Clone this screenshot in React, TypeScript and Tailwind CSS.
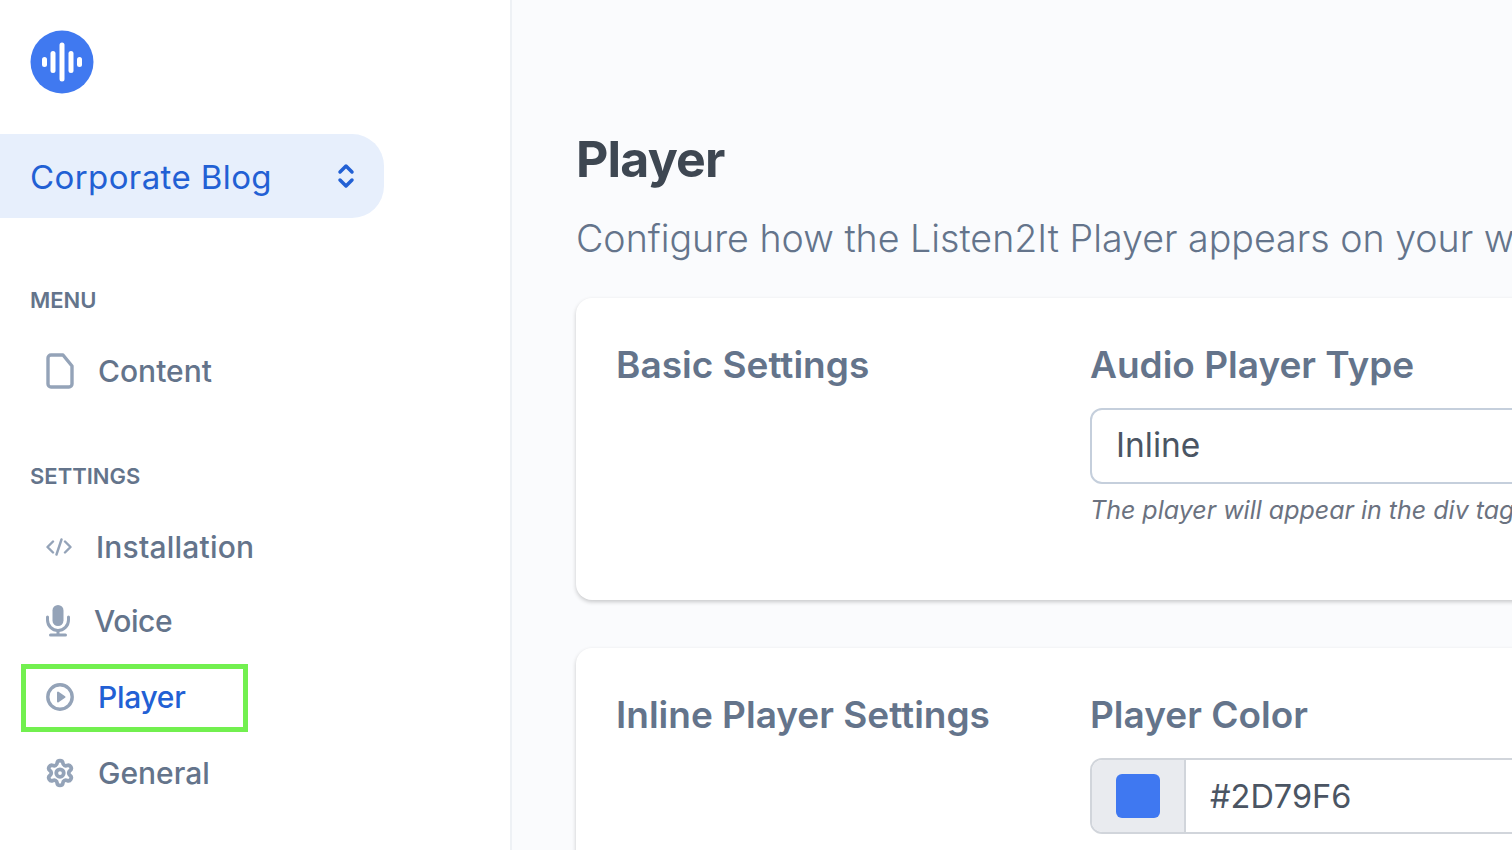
import { ChevronDown, ChevronUp, Settings } from "lucide-react"

const font = { sans: "font-['Inter','Liberation_Sans',sans-serif]" }

function Logo() {
  return (
    <svg width="64" height="64" viewBox="0 0 64 64">
      <circle cx="32" cy="32" r="31.5" fill="#4079F0" />
      <g stroke="#fff" strokeWidth="5" strokeLinecap="round">
        <line x1="14.5" y1="29.5" x2="14.5" y2="34.5" />
        <line x1="23" y1="23.5" x2="23" y2="40.5" />
        <line x1="32" y1="15" x2="32" y2="49" />
        <line x1="41" y1="23.5" x2="41" y2="40.5" />
        <line x1="49.5" y1="29.5" x2="49.5" y2="34.5" />
      </g>
    </svg>
  )
}

function FileIcon() {
  return (
    <svg width="28" height="36" viewBox="0 0 28 36" fill="none" stroke="#94A3B8" strokeWidth="3.4" strokeLinejoin="round">
      <path d="M5 2h12l9 11v18a3 3 0 0 1-3 3H5a3 3 0 0 1-3-3V5a3 3 0 0 1 3-3z" />
    </svg>
  )
}

function CodeIcon() {
  return (
    <svg width="26" height="18" viewBox="0 0 26 18" fill="none" stroke="#94A3B8" strokeWidth="2.4" strokeLinecap="round" strokeLinejoin="round">
      <path d="M7 3.5 1.5 9 7 14.5" />
      <path d="M15.5 1.5 10.5 16.5" />
      <path d="M19 3.5 24.5 9 19 14.5" />
    </svg>
  )
}

function MicIcon() {
  return (
    <svg width="24" height="32" viewBox="0 0 24 32" fill="none">
      <rect x="6.5" y="0" width="11" height="21" rx="5.5" fill="#94A3B8" />
      <path d="M1.5 12v3a10.5 10.5 0 0 0 21 0v-3" stroke="#94A3B8" strokeWidth="3" strokeLinecap="round" />
      <path d="M12 26v4M4.5 30h15" stroke="#94A3B8" strokeWidth="3" strokeLinecap="round" />
    </svg>
  )
}

function PlayIcon() {
  return (
    <svg width="28" height="28" viewBox="0 0 28 28" fill="none">
      <circle cx="14" cy="14" r="12.2" stroke="#94A3B8" strokeWidth="3.4" />
      <path d="M12 9.5v9l6.5-4.5z" fill="#94A3B8" stroke="#94A3B8" strokeWidth="2" strokeLinejoin="round" />
    </svg>
  )
}

export default function App() {
  return (
    <div className={`flex h-screen overflow-hidden bg-[#FAFBFD] ${font.sans}`}>
      <aside className="w-[512px] shrink-0 border-r-2 border-[#EEF1F5] bg-white">
        <div className="pl-[30px] pt-[30px]">
          <Logo />
        </div>
        <div className="mt-[40px] flex h-[84px] w-[384px] items-center justify-between rounded-r-[32px] bg-[#E7EFFC] pl-[30px] pr-[26px]">
          <span className="pt-[3px] text-[33px] tracking-[0.4px] text-[#2260D4]">Corporate Blog</span>
          <span className="flex flex-col items-center text-[#2260D4]">
            <ChevronUp size={24} strokeWidth={3.5} className="-mb-[5px]" />
            <ChevronDown size={24} strokeWidth={3.5} className="-mt-[5px]" />
          </span>
        </div>

        <div className="mt-[68px] pl-[30px] text-[22px] font-semibold leading-[28px] text-[#64748B]">MENU</div>
        <div className="mt-[33px] flex h-[48px] items-center pl-[46px] text-[30px] font-medium text-[#64748B]">
          <FileIcon />
          <span className="ml-[24px]">Content</span>
        </div>

        <div className="mt-[67px] pl-[30px] text-[22px] font-semibold leading-[28px] text-[#64748B]">SETTINGS</div>
        <div className="mt-[33px] flex h-[48px] items-center pl-[46px] text-[30px] font-medium text-[#64748B]">
          <CodeIcon />
          <span className="ml-[24px] tracking-[0.2px]">Installation</span>
        </div>
        <div className="mt-[26px] flex h-[48px] items-center pl-[46px] text-[30px] font-medium text-[#64748B]">
          <MicIcon />
          <span className="ml-[24px] tracking-[-0.4px]">Voice</span>
        </div>
        <div className="ml-[21px] mt-[19px] flex h-[68px] w-[227px] items-center border-[5px] border-[#72F04F] pb-[2px] pl-[20px] text-[30px] font-medium text-[#2260D4]">
          <PlayIcon />
          <span className="ml-[24px] tracking-[-0.3px]">Player</span>
        </div>
        <div className="mt-[17px] flex h-[48px] items-center pl-[45px] text-[30px] font-medium text-[#64748B]">
          <Settings size={30} strokeWidth={3} color="#94A3B8" />
          <span className="ml-[23px]">General</span>
        </div>
      </aside>

      <main className="w-[1400px] shrink-0 pl-[64px] pt-[128px]">
        <h1 className="text-[50px] font-bold leading-[62px] tracking-[-0.8px] text-[#3E4752]">Player</h1>
        <p className="mt-[28px] whitespace-nowrap text-[37.6px] font-light leading-[42px] text-[#64748B]">
          Configure how the Listen2It Player appears on your website
        </p>

        <section className="mt-[38px] flex h-[302px] rounded-[16px] bg-white pl-[40px] pt-[43px] shadow-[0_2px_4px_rgba(0,0,0,0.2)]">
          <h2 className="w-[474px] text-[37px] font-semibold leading-[48px] text-[#64748B]">Basic Settings</h2>
          <div className="flex-1">
            <h3 className="text-[37px] font-semibold leading-[48px] text-[#64748B]">Audio Player Type</h3>
            <div className="mt-[19px] flex h-[76px] items-center rounded-[12px] border-2 border-[#C5CFDC] pb-[2px] pl-[24px] text-[33.5px] text-[#4B5563]">
              Inline
            </div>
            <p className="mt-[10px] whitespace-nowrap text-[25px] italic leading-[32px] text-[#6B7280]">
              The player will appear in the div tag you place on your page
            </p>
          </div>
        </section>

        <section className="mt-[48px] flex h-[400px] rounded-[16px] bg-white pl-[40px] pt-[43px] shadow-[0_2px_4px_rgba(0,0,0,0.2)]">
          <h2 className="w-[474px] text-[37px] font-semibold leading-[48px] text-[#64748B]">Inline Player Settings</h2>
          <div className="flex-1">
            <h3 className="text-[37px] font-semibold leading-[48px] text-[#64748B]">Player Color</h3>
            <div className="mt-[19px] flex h-[76px] items-stretch overflow-hidden rounded-[12px] border-2 border-[#D1D5DB]">
              <div className="flex w-[94px] items-center justify-center border-r-2 border-[#D1D5DB] bg-[#E9EBEF]">
                <div className="h-[44px] w-[44px] rounded-[6px] bg-[#3F78F1]" />
              </div>
              <div className="flex items-center pl-[24px] pt-[2px] text-[32.5px] text-[#4B5563]">#2D79F6</div>
            </div>
          </div>
        </section>
      </main>
    </div>
  )
}
